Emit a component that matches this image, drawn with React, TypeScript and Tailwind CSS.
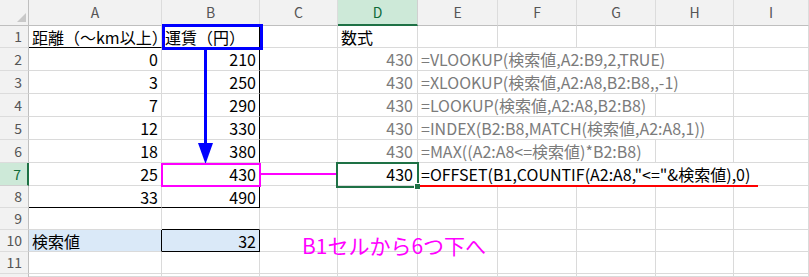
import React from "react";

type CellProps = {
  className?: string;
  children?: React.ReactNode;
};

const grid = "border-r border-b border-[#dadada]";
const gray = "text-[#7b7b7b]";

function Cell({ className = "", children }: CellProps) {
  return (
    <div className={`flex items-center whitespace-nowrap overflow-visible px-[3px] ${className}`}>
      {children}
    </div>
  );
}

function ColHead({ label, active = false }: { label: string; active?: boolean }) {
  return (
    <div
      className={
        active
          ? "flex items-center justify-center bg-[#cde9d8] text-[#0f6b38] text-[14px] border-r border-[#d0d0d0] border-b-2 border-b-[#1e7145]"
          : "flex items-center justify-center bg-[#f2f2f2] text-[#555] text-[14px] border-r border-[#dcdcdc] border-b border-b-[#bfbfbf]"
      }
    >
      {label}
    </div>
  );
}

function RowHead({ n, active = false }: { n: number; active?: boolean }) {
  return (
    <div
      className={
        active
          ? "flex items-center justify-end pr-[6px] bg-[#cde9d8] text-[#0f6b38] text-[14px] border-b border-[#d0d0d0] border-r-2 border-r-[#1e7145]"
          : "flex items-center justify-end pr-[6px] bg-[#f2f2f2] text-[#555] text-[14px] border-b border-[#dcdcdc] border-r border-r-[#bfbfbf]"
      }
    >
      {n}
    </div>
  );
}

type Row = {
  a?: string;
  b?: string;
  d?: string;
  e?: string;
  eSpan: number;
};

const rows: Row[] = [
  { a: "0", b: "210", d: "430", e: "=VLOOKUP(検索値,A2:B9,2,TRUE)", eSpan: 4 },
  { a: "3", b: "250", d: "430", e: "=XLOOKUP(検索値,A2:A8,B2:B8,,-1)", eSpan: 4 },
  { a: "7", b: "290", d: "430", e: "=LOOKUP(検索値,A2:A8,B2:B8)", eSpan: 3 },
  { a: "12", b: "330", d: "430", e: "=INDEX(B2:B8,MATCH(検索値,A2:A8,1))", eSpan: 4 },
  { a: "18", b: "380", d: "430", e: "=MAX((A2:A8<=検索値)*B2:B8)", eSpan: 3 },
  { a: "25", b: "430", d: "430", e: '=OFFSET(B1,COUNTIF(A2:A8,"<="&検索値),0)', eSpan: 5 },
];

const spanClass: Record<number, string> = {
  3: "col-span-3",
  4: "col-span-4",
  5: "col-span-5",
};

function blanks(count: number, key: string) {
  return Array.from({ length: count }, (_, i) => <div key={`${key}-${i}`} className={grid} />);
}

export default function App() {
  return (
    <div className="relative w-[809px] h-[277px] overflow-hidden bg-white font-['Noto_Sans_CJK_JP','Noto_Sans',sans-serif] text-[16px] text-black">
      <div className="grid grid-cols-[29px_133px_98px_78px_80px_80px_79px_79px_78px_75px] grid-rows-[26px_22px_23px_23px_23px_23px_23px_23px_22px_22px_22px_22px_3px]">
        {/* column headers */}
        <div className="relative bg-[#f2f2f2] border-r border-r-[#bfbfbf] border-b border-b-[#bfbfbf]">
          <svg className="absolute left-0 top-0" width="29" height="26" viewBox="0 0 29 26">
            <polygon points="17,22 26,22 26,13" fill="#c8c8c8" />
          </svg>
        </div>
        <ColHead label="A" />
        <ColHead label="B" />
        <ColHead label="C" />
        <ColHead label="D" active />
        <ColHead label="E" />
        <ColHead label="F" />
        <ColHead label="G" />
        <ColHead label="H" />
        <ColHead label="I" />

        {/* row 1 */}
        <RowHead n={1} />
        <Cell className="border-r border-[#dadada] border-b border-b-black">距離（～km以上）</Cell>
        <Cell className="border-r border-r-black border-b border-b-black">運賃（円）</Cell>
        <div className={grid} />
        <Cell className={grid}>数式</Cell>
        {blanks(5, "r1")}

        {/* rows 2-7 */}
        {rows.map((r, i) => {
          const n = i + 2;
          const last = n === 7;
          return (
            <React.Fragment key={n}>
              <RowHead n={n} active={last} />
              <Cell className={`justify-end ${grid}`}>{r.a}</Cell>
              <Cell className="justify-end border-r border-r-black border-b border-b-[#dadada]">{r.b}</Cell>
              <div className={grid} />
              <Cell className={`justify-end pr-[4px] ${grid} ${last ? "" : gray}`}>{r.d}</Cell>
              <Cell className={`${spanClass[r.eSpan]} ${grid} ${last ? "" : gray}`}>{r.e}</Cell>
              {blanks(5 - r.eSpan, `r${n}`)}
            </React.Fragment>
          );
        })}

        {/* row 8 */}
        <RowHead n={8} />
        <Cell className="justify-end border-r border-[#dadada] border-b border-b-black">33</Cell>
        <Cell className="justify-end border-r border-r-black border-b border-b-black">490</Cell>
        {blanks(7, "r8")}

        {/* row 9 */}
        <RowHead n={9} />
        <div className={grid} />
        <div className="border-r border-r-[#dadada] border-b border-b-black" />
        {blanks(7, "r9")}

        {/* row 10 */}
        <RowHead n={10} />
        <Cell className="bg-[#dae9f8] border-r border-r-black border-b border-b-[#dadada]">検索値</Cell>
        <Cell className="justify-end bg-[#dae9f8] border-r border-r-black border-b border-b-black">32</Cell>
        {blanks(7, "r10")}

        {/* row 11 */}
        <RowHead n={11} />
        {blanks(9, "r11")}

        {/* row 12 (cut off) */}
        <div className="bg-[#f2f2f2] border-r border-r-[#bfbfbf]" />
        {blanks(9, "r12")}
      </div>

      {/* B1 marker and arrow down to B7 */}
      <div className="absolute left-[162px] top-[24px] w-[101px] h-[26px] border-[3px] border-[#0000ff]" />
      <div className="absolute left-[204px] top-[50px] w-[3px] h-[94px] bg-[#0000ff]" />
      <svg className="absolute left-[198px] top-[143px]" width="15" height="21" viewBox="0 0 15 21">
        <polygon points="0,0 15,0 7.5,21" fill="#0000ff" />
      </svg>

      {/* B7 marker linked to D7 */}
      <div className="absolute left-[161px] top-[163px] w-[100px] h-[24px] border-2 border-[#ff00ff]" />
      <div className="absolute left-[261px] top-[173px] w-[77px] h-[2px] bg-[#ff00ff]" />

      {/* active cell D7 */}
      <div className="absolute left-[336px] top-[162px] w-[83px] h-[26px] border-2 border-[#1e7145]" />
      <div className="absolute left-[414px] top-[183px] w-[7px] h-[7px] bg-[#1e7145] border border-white" />

      {/* underline under the OFFSET formula */}
      <div className="absolute left-[420px] top-[185px] w-[338px] h-[2px] bg-[#ff0000]" />

      <div className="absolute left-[302px] top-[230px] text-[21px] leading-[30px] text-[#ff00ff] whitespace-nowrap">
        B1セルから6つ下へ
      </div>
    </div>
  );
}
